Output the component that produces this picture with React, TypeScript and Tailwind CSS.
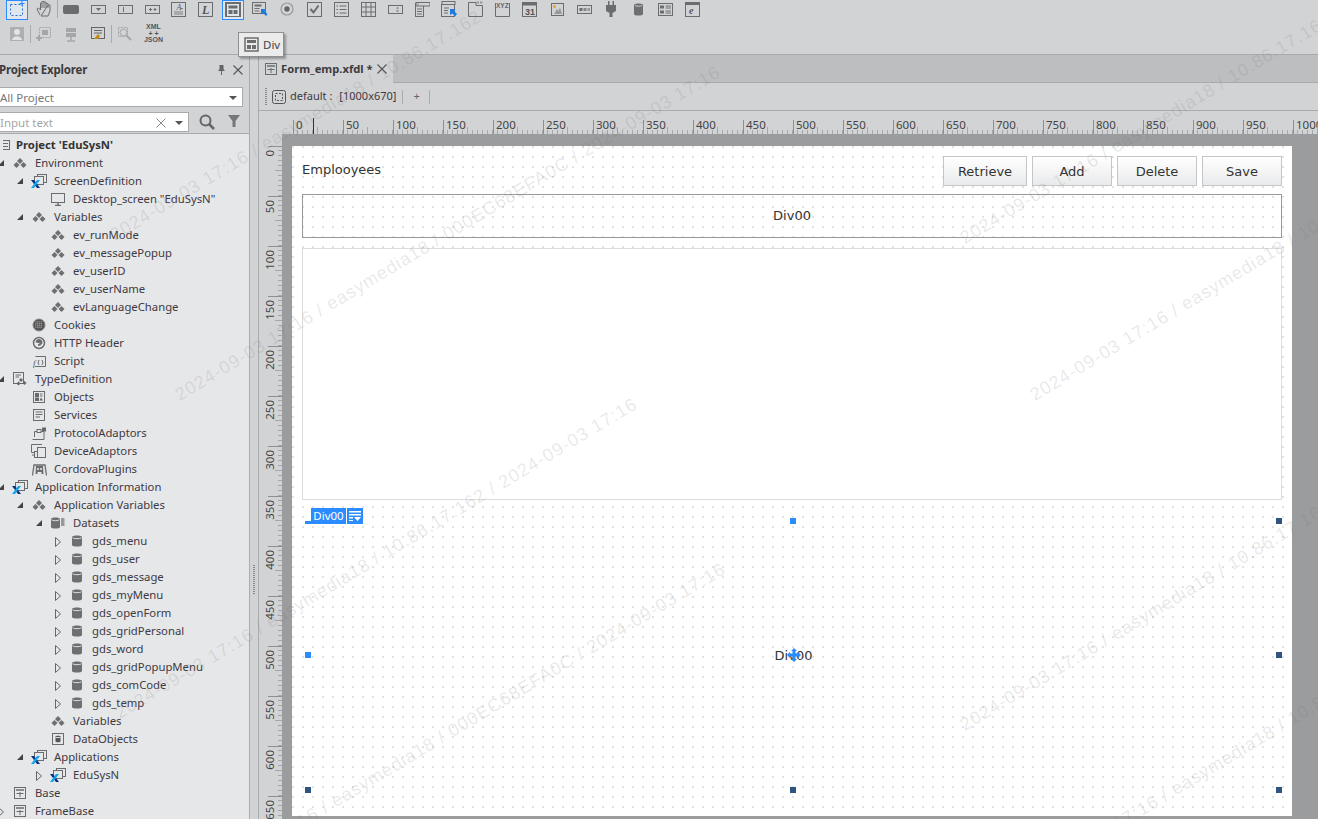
import React from "react";

const S = "#6b6c6e";
function Ico({ w = 16, h = 16, children }: { w?: number; h?: number; children: React.ReactNode }) {
  return (
    <svg width={w} height={h} viewBox={`0 0 ${w} ${h}`} fill="none" stroke={S} strokeWidth="1" className="block shrink-0">
      {children}
    </svg>
  );
}
const X = ({ x = 0, y = 8 }: { x?: number; y?: number }) => (
  <g transform={`translate(${x},${y})`}>
    <path d="M0 0 L3 0 L9 8 L6 8 Z" fill="#0c2f7a" stroke="none" />
    <path d="M6 0 L9 0 L3 8 L0 8 Z" fill="#12a5ea" stroke="none" />
  </g>
);
const Diamonds = () => (
  <Ico w={14} h={12}>
    <g fill="#6e6f71" stroke="none">
      <path d="M7 1 L10 4 L7 7 L4 4 Z" />
      <path d="M3.5 5 L6.5 8 L3.5 11 L.5 8 Z" />
      <path d="M10.5 5 L13.5 8 L10.5 11 L7.5 8 Z" />
    </g>
  </Ico>
);
const Screen = () => (
  <Ico w={16} h={16}>
    <rect x="6.5" y="1.5" width="9" height="8" />
    <rect x="3.5" y="3.5" width="9" height="8" fill="#e6e7e9" />
    <X x={0} y={7} />
  </Ico>
);
const Monitor = () => (
  <Ico w={14} h={13}>
    <rect x=".5" y=".5" width="13" height="9" />
    <path d="M4 12.5 H10 M7 10 V12" strokeWidth="1.5" />
  </Ico>
);
const Globe = () => (
  <Ico w={14} h={14}>
    <circle cx="7" cy="7" r="6" fill="#555" stroke="#888" />
    <path d="M3 5 H11 M3 7 H11 M3 9 H11 M5 3 V11 M7 3 V11 M9 3 V11" stroke="#999" strokeDasharray="1 1" />
  </Ico>
);
const Http = () => (
  <Ico w={14} h={14}>
    <circle cx="7" cy="7" r="5.5" strokeWidth="1.5" />
    <path d="M4 6 A3 3 0 0 1 10 7 A3 3 0 0 1 6 9 L9 7 Z" fill={S} />
  </Ico>
);
const Script = () => (
  <Ico w={14} h={13}>
    <path d="M3.5 1.5 H13.5 V11.5 H3" />
    <text x="1" y="11" fontSize="9" fontStyle="italic" fontFamily="Liberation Serif, serif" fill="#555" stroke="none">f</text>
    <path d="M7 5 L6 8 L7 10 M10 5 L11 8 L10 10" />
  </Ico>
);
const TypeDef = () => (
  <Ico w={14} h={14}>
    <rect x=".5" y=".5" width="10" height="11" />
    <path d="M2.5 3 H8 M2.5 5 H6" />
    <path d="M8 6 L10 8 L8 10 L6 8 Z M11.5 9 L13.5 11 L11.5 13 L9.5 11 Z M5.5 9.5 L7.5 11.5 L5.5 13.5 L3.5 11.5 Z" fill="#666" stroke="none" />
  </Ico>
);
const Objects = () => (
  <Ico w={12} h={12}>
    <rect x=".5" y=".5" width="11" height="11" />
    <rect x="2.5" y="2.5" width="3" height="3" fill="#666" />
    <path d="M7 3 H9.5 M7 5 H9.5" />
    <rect x="2.5" y="7" width="3" height="2.5" fill="#666" />
    <path d="M8 6.5 L10 9.5 H6.5 Z" fill="#666" stroke="none" />
  </Ico>
);
const Services = () => (
  <Ico w={12} h={12}>
    <rect x=".5" y=".5" width="11" height="11" />
    <path d="M2.5 3 H9.5 M2.5 5.5 H9.5 M2.5 8 H7" strokeWidth="1.2" />
  </Ico>
);
const Protocol = () => (
  <Ico w={15} h={13}>
    <path d="M.5 12.5 H12 V4.5 H2.5 V10" />
    <rect x="5" y="2.5" width="4" height="3" fill="#e6e7e9" />
    <rect x="10" y=".5" width="4" height="4" fill="#666" stroke="none" />
  </Ico>
);
const Device = () => (
  <Ico w={16} h={14}>
    <path d="M11 .5 H.5 V8.5 H3 M1 11 H6" />
    <rect x="6.5" y="3.5" width="8" height="10" fill="#e6e7e9" />
    <rect x="3.5" y="7.5" width="3" height="6" fill="#e6e7e9" />
  </Ico>
);
const Cordova = () => (
  <Ico w={15} h={14}>
    <path d="M.5 13.5 L2 3 H13 L14.5 13.5" strokeWidth="1.3" />
    <path d="M4 4 H11 L11.5 12 H9.5 V10 H5.5 V12 H3.5 Z" fill="#6b6c6e" stroke="none" />
    <circle cx="6" cy="7" r="1" fill="#eee" stroke="none" />
    <circle cx="9" cy="7" r="1" fill="#eee" stroke="none" />
  </Ico>
);
const Db = () => (
  <Ico w={10} h={12}>
    <path d="M0 2 C0 0 10 0 10 2 V10 C10 12 0 12 0 10 Z" fill="#6e6f71" stroke="none" />
    <path d="M.5 2.8 C2 4 8 4 9.5 2.8" stroke="#ddd" />
  </Ico>
);
const Datasets = () => (
  <Ico w={14} h={12}>
    <path d="M0 2 C0 0 9 0 9 2 V10 C9 12 0 12 0 10 Z" fill="#6e6f71" stroke="none" />
    <path d="M.5 2.8 C2 4 7 4 8.5 2.8" stroke="#ddd" />
    <path d="M10 1 H13.5 V9 H10 Z" fill="#999" stroke="none" />
  </Ico>
);
const DataObjects = () => (
  <Ico w={12} h={12}>
    <rect x=".5" y=".5" width="11" height="11" />
    <path d="M3.5 3.5 C3.5 2.5 8.5 2.5 8.5 3.5 V8.5 C8.5 9.5 3.5 9.5 3.5 8.5 Z" fill="#555" stroke="none" />
    <path d="M3.5 4.5 H8.5" stroke="#ddd" />
  </Ico>
);
const FormIco = () => (
  <Ico w={12} h={12}>
    <rect x=".5" y=".5" width="11" height="11" strokeWidth="1" />
    <path d="M2 3 H10" strokeWidth="1.5" />
    <path d="M6 5 V10 M2.5 6.5 H9.5" />
  </Ico>
);
const Project = () => (
  <Ico w={10} h={12}>
    <rect x="-2.5" y="1.5" width="9" height="9" />
    <path d="M-1 4.5 H5 M-1 7.5 H5" />
  </Ico>
);

type Row = { d: number; e?: "o" | "c"; i?: React.ReactNode; t: string; b?: boolean };
const dia = <Diamonds />;
const db = <Db />;
const rows: Row[] = [
  { d: 0, i: <Project />, t: "Project 'EduSysN'", b: true },
  { d: 1, e: "o", i: dia, t: "Environment" },
  { d: 2, e: "o", i: <Screen />, t: "ScreenDefinition" },
  { d: 3, i: <Monitor />, t: 'Desktop_screen "EduSysN"' },
  { d: 2, e: "o", i: dia, t: "Variables" },
  { d: 3, i: dia, t: "ev_runMode" },
  { d: 3, i: dia, t: "ev_messagePopup" },
  { d: 3, i: dia, t: "ev_userID" },
  { d: 3, i: dia, t: "ev_userName" },
  { d: 3, i: dia, t: "evLanguageChange" },
  { d: 2, i: <Globe />, t: "Cookies" },
  { d: 2, i: <Http />, t: "HTTP Header" },
  { d: 2, i: <Script />, t: "Script" },
  { d: 1, e: "o", i: <TypeDef />, t: "TypeDefinition" },
  { d: 2, i: <Objects />, t: "Objects" },
  { d: 2, i: <Services />, t: "Services" },
  { d: 2, i: <Protocol />, t: "ProtocolAdaptors" },
  { d: 2, i: <Device />, t: "DeviceAdaptors" },
  { d: 2, i: <Cordova />, t: "CordovaPlugins" },
  { d: 1, e: "o", i: <Screen />, t: "Application Information" },
  { d: 2, e: "o", i: dia, t: "Application Variables" },
  { d: 3, e: "o", i: <Datasets />, t: "Datasets" },
  ...["gds_menu", "gds_user", "gds_message", "gds_myMenu", "gds_openForm", "gds_gridPersonal", "gds_word", "gds_gridPopupMenu", "gds_comCode", "gds_temp"].map(
    (t) => ({ d: 4, e: "c" as const, i: db, t })
  ),
  { d: 3, i: dia, t: "Variables" },
  { d: 3, i: <DataObjects />, t: "DataObjects" },
  { d: 2, e: "o", i: <Screen />, t: "Applications" },
  { d: 3, e: "c", i: <Screen />, t: "EduSysN" },
  { d: 1, i: <FormIco />, t: "Base" },
  { d: 1, e: "c", i: <FormIco />, t: "FrameBase" },
];

function TreeRow({ r }: { r: Row }) {
  const textX = r.d === 0 ? 16 : 16 + r.d * 19;
  return (
    <div className="relative h-[18px] flex items-center whitespace-nowrap text-[11.3px]" style={{ paddingLeft: textX }}>
      {r.e && (
        <span className="absolute top-[5px]" style={{ left: textX - 38 }}>
          {r.e === "o" ? (
            <svg width="8" height="8" viewBox="0 0 8 8" className="block">
              <path d="M7 1 V7 H1 Z" fill="#444" />
            </svg>
          ) : (
            <svg width="8" height="10" viewBox="0 0 8 10" className="block">
              <path d="M1.5 .5 L6.5 5 L1.5 9.5 Z" fill="none" stroke="#666" />
            </svg>
          )}
        </span>
      )}
      <span className="absolute top-0 h-[18px] w-[16px] flex items-center justify-center" style={{ left: r.d === 0 ? 0 : textX - 23 }}>
        {r.i}
      </span>
      <span className={r.b ? "font-bold text-[#333]" : "text-[#3e3a42]"}>{r.t}</span>
    </div>
  );
}

const TB = ({ sel, children, sep }: { sel?: boolean; children?: React.ReactNode; sep?: boolean }) => (
  <div className="w-[27px] h-[18px] shrink-0 flex items-center justify-center relative">
    {sel && <span className="absolute left-[1px] top-0 w-[22px] h-[20px] border border-[#2a8cff] bg-[#dfe6ee]" />}
    <span className="relative -ml-[3px]">{children}</span>
    {sep && <span className="absolute right-[1px] top-0 h-[18px] w-px bg-[#a9aaac]" />}
  </div>
);

const top: React.ReactNode[] = [
  <Ico key="a"><rect x="1.5" y="3.5" width="12" height="11" stroke="#2a6fd0" strokeDasharray="2 2" /><path d="M13 0 V5 M10.5 2.5 H15.5" stroke="#2a8cff" /></Ico>,
  <Ico w={18} h={18} key="b"><path d="M5 15 L2 9 L3.5 8 L5.5 10 V3 H7 V8 M7 3 V1.5 H9 V8 M9 2 H11 V8 M11 3.5 H13 V8 M13 5 H15 V11 L13 16 H6 Z" /></Ico>,
  <svg key="c" width="16" height="9" viewBox="0 0 16 9" className="block"><rect width="16" height="9" rx="2" fill="#6b6c6e" /></svg>,
  <Ico w={15} h={9} key="d"><rect x=".5" y=".5" width="14" height="8" /><path d="M5 3 H10 L7.5 6 Z" fill={S} stroke="none" /></Ico>,
  <Ico w={15} h={9} key="e"><rect x=".5" y=".5" width="14" height="8" /><path d="M5.5 2 V7" /></Ico>,
  <Ico w={15} h={9} key="f"><rect x=".5" y=".5" width="14" height="8" /><path d="M4 4.5 H7 M5.5 3 V6 M8.5 4.5 H11.5 M10 3 V6" /></Ico>,
  <Ico key="g"><rect x=".5" y="1.5" width="14" height="14" /><text x="5.5" y="9" fontSize="8" fontStyle="italic" fontFamily="Liberation Serif, serif" fill="#555" stroke="none">A</text><path d="M3 11 H12 M9 7.5 H12 M3 13 H12" strokeWidth=".8" /></Ico>,
  <Ico key="h"><rect x=".5" y="1.5" width="14" height="14" /><text x="4" y="13" fontSize="12" fontWeight="bold" fontStyle="italic" fontFamily="Liberation Serif, serif" fill="#555" stroke="none">L</text></Ico>,
  <Ico key="i"><rect x="1" y="2" width="14" height="14" strokeWidth="2" /><rect x="3.5" y="4.5" width="9" height="3" fill={S} stroke="none" /><rect x="3.5" y="9" width="4" height="4" fill={S} stroke="none" /><rect x="8.5" y="9" width="4" height="4" fill={S} stroke="none" /></Ico>,
  <Ico w={16} h={16} key="j"><rect x=".5" y="1.5" width="13" height="11" strokeWidth="1" /><rect x="2.5" y="3.5" width="7" height="2" fill={S} stroke="none" /><rect x="2.5" y="7" width="5" height="1" fill={S} stroke="none" /><rect x="2.5" y="9.5" width="5" height="1" fill={S} stroke="none" /><path d="M9 8 H14 L12.5 10 L15.5 13 L14 15 L11 12 L9 13.5 Z" fill="#1b7be0" stroke="none" /></Ico>,
  <Ico w={14} h={14} key="k"><circle cx="7" cy="7" r="6" stroke="#999" strokeWidth="1.2" /><circle cx="7" cy="7" r="2.7" fill="#666" stroke="none" /></Ico>,
  <Ico w={15} h={15} key="l"><rect x=".5" y=".5" width="14" height="14" /><path d="M3.5 7 L6.5 10.5 L11.5 3.5" strokeWidth="2" /></Ico>,
  <Ico w={15} h={15} key="m"><rect x=".5" y=".5" width="14" height="14" /><path d="M2.5 4 H4 M5.5 4 H12.5 M2.5 7.5 H4 M5.5 7.5 H12.5 M2.5 11 H4 M5.5 11 H12.5" /></Ico>,
  <Ico w={15} h={15} key="n"><rect x=".5" y=".5" width="14" height="14" /><path d="M.5 5 H14.5 M.5 10 H14.5 M5 .5 V14.5 M10 .5 V14.5" /></Ico>,
  <Ico w={15} h={9} key="o"><rect x=".5" y=".5" width="14" height="8" /><path d="M8 3.5 L9.5 2 L11 3.5 Z M8 5.5 L9.5 7 L11 5.5 Z" fill={S} stroke="none" /></Ico>,
  <Ico w={15} h={15} key="p"><rect x=".5" y="1.5" width="8" height="13" /><rect x="1" y=".5" width="14" height="3.5" fill="#d2d3d5" /><path d="M3 1.5 V3 M2 7 H7 M2 9.5 H7 M2 12 H7" /></Ico>,
  <Ico key="q"><rect x=".5" y="3.5" width="13" height="12" strokeWidth="1" /><rect x="1" y=".5" width="13" height="3" fill="#d2d3d5" /><path d="M3 7 H8 M3 9.5 H7 M3 12 H7" /><path d="M9 8 H14.5 L13 10 L16 13 L14 15.5 L11.5 12.5 L9 14 Z" fill="#1b7be0" stroke="none" /></Ico>,
  <Ico key="r"><path d="M.5 15.5 V1.5 H8 V4.5 H14.5 V15.5 Z" /><rect x="8.5" y=".5" width="2.5" height="2" fill="#999" stroke="none" /><rect x="12" y=".5" width="2.5" height="2" fill="#999" stroke="none" /></Ico>,
  <Ico key="s"><path d="M.5 2 V15.5 H14.5 V2" /><text x="1" y="7" fontSize="6.5" fontWeight="bold" fontFamily="Liberation Sans, sans-serif" fill="#666" stroke="none">XYZ</text></Ico>,
  <Ico key="t"><rect x=".5" y="1.5" width="14" height="14" /><rect x=".5" y="1.5" width="14" height="3" fill={S} stroke="none" /><text x="3" y="13.5" fontSize="9" fontWeight="bold" fontFamily="Liberation Sans, sans-serif" fill="#555" stroke="none">31</text></Ico>,
  <Ico w={13} h={13} key="u"><rect x=".5" y=".5" width="12" height="12" /><circle cx="3.5" cy="3.5" r="1.3" fill="#d79a1c" stroke="none" /><path d="M3 11 L6 6 L7.5 8 L9 4.5 L11 11 Z" fill="#999" stroke="none" /></Ico>,
  <Ico w={15} h={9} key="v"><rect x=".5" y=".5" width="14" height="8" /><rect x="2.5" y="3" width="3" height="3" fill={S} stroke="none" /><rect x="6.5" y="3" width="3" height="3" fill="#888" stroke="none" /><rect x="10.5" y="3" width="2.5" height="3" fill="#999" stroke="none" /></Ico>,
  <svg key="w" width="10" height="16" viewBox="0 0 10 16" className="block"><path d="M2 0 H3.5 V4 H6.5 V0 H8 V4 H10 V10 L6.5 12 V16 H3.5 V12 L0 10 V4 H2 Z" fill="#6b6c6e" /></svg>,
  <svg key="x" width="9" height="13" viewBox="0 0 9 13" className="block"><path d="M0 2 C0 0 9 0 9 2 V11 C9 13 0 13 0 11 Z" fill="#6e6f71" /><path d="M1 2.5 C3 3.5 6 3.5 8 2.5" stroke="#ccc" fill="none" /></svg>,
  <Ico w={15} h={13} key="y"><rect x=".5" y=".5" width="14" height="12" /><rect x="2" y="2.5" width="4" height="3" fill={S} stroke="none" /><rect x="2" y="7.5" width="4" height="3" fill={S} stroke="none" /><path d="M7.5 3 H13 M7.5 5 H13 M7.5 8 H13 M7.5 10 H13" /></Ico>,
  <Ico w={15} h={15} key="z"><rect x=".5" y=".5" width="14" height="14" /><rect x=".5" y=".5" width="14" height="2.5" fill={S} stroke="none" /><text x="4" y="12" fontSize="10" fontWeight="bold" fontStyle="italic" fontFamily="Liberation Serif, serif" fill="#555" stroke="none">e</text></Ico>,
];

const D = "2024-09-03 17:16";
const marks: { x: number; y: number; t: string }[] = [
  { x: 105, y: 225, t: `${D} / easymedia18 / 10.86.17.162` },
  { x: 170, y: 385, t: `${D} / easymedia18 / 000EC68EFA0C / ${D}` },
  { x: 110, y: 703, t: `${D} / easymedia18 / 10.86.17.162 / ${D}` },
  { x: 175, y: 882, t: `${D} / easymedia18 / 000EC68EFA0C / ${D}` },
  { x: 955, y: 228, t: `${D} / easymedia18 / 10.86.17.162` },
  { x: 1025, y: 385, t: `${D} / easymedia18 / 10.86.17.162` },
  { x: 955, y: 715, t: `${D} / easymedia18 / 10.86.17.162` },
  { x: 1015, y: 870, t: `${D} / easymedia18 / 10.86.17.162` },
];

const five = Array.from({ length: 10 }, (_, k) => k);

function TopRuler() {
  const items = Array.from({ length: 21 }, (_, i) => i * 50);
  return (
    <div className="relative h-[23px] shrink-0 overflow-hidden bg-[#d2d3d5]">
      <div className="flex ml-[34px] h-full">
        {items.map((n) => (
          <div key={n} className="relative w-[50px] h-full shrink-0">
            <span className="absolute left-0 top-[9px] bottom-0 w-px bg-[#8e8f91]" />
            <span className="absolute left-[3px] top-[6px] text-[#444] leading-[16px]">{n}</span>
            <div className="absolute left-0 right-0 bottom-0 h-[4px] flex items-end">
              {five.map((k) => (
                <span key={k} className={`w-[5px] border-r border-[#a5a6a8] ${k === 4 ? "h-[7px]" : "h-[4px]"}`} />
              ))}
            </div>
          </div>
        ))}
      </div>
      <span className="absolute left-[54px] top-[7px] h-[16px] w-px bg-[#333]" />
    </div>
  );
}

function LeftRuler() {
  const items = Array.from({ length: 14 }, (_, i) => i * 50);
  return (
    <div className="w-[23px] shrink-0 bg-[#d2d3d5] overflow-hidden pt-[12px]">
      {items.map((n) => (
        <div key={n} className="relative h-[50px] w-full">
          <span className="absolute right-0 top-0 w-[14px] h-px bg-[#8e8f91]" />
          <span className="absolute left-[4px] top-[4px] leading-[14px] [writing-mode:vertical-rl] rotate-180 text-[#444]">{n}</span>
          <div className="absolute right-0 top-0 bottom-0 w-[4px] flex flex-col items-end">
            {five.map((k) => (
              <span key={k} className={`h-[5px] shrink-0 border-b border-[#a5a6a8] ${k === 4 ? "w-[7px]" : "w-[4px]"}`} />
            ))}
          </div>
        </div>
      ))}
    </div>
  );
}

const Handle = ({ cls }: { cls: string }) => <span className={`absolute w-[6px] h-[6px] ${cls}`} />;

const Btn = ({ t, w }: { t: string; w: string }) => (
  <div className={`${w} h-[30px] pt-px flex items-center justify-center border border-[#c4c5c6] bg-gradient-to-b from-white to-[#e9eaeb] text-[#333]`}>{t}</div>
);

export default function App() {
  return (
    <div className="relative w-[1318px] h-[819px] overflow-hidden bg-[#d2d3d5] text-[11.5px] font-['Noto_Sans',sans-serif]">
      {/* Toolbars */}
      <div className="h-[55px] border-b border-[#a9aaac] bg-[#d2d3d5]">
        <div className="flex items-center h-[18px] pl-[5px]">
          {top.map((ic, i) => (
            <TB key={i} sel={i === 0 || i === 8} sep={i === 1}>
              {ic}
            </TB>
          ))}
        </div>
        <div className="flex items-center h-[24px] pl-[5px] mt-[4px]">
          <TB sep>
            <svg width="15" height="15" viewBox="0 0 15 15" className="block"><rect width="14" height="14" fill="#aeafb1" /><circle cx="7" cy="5" r="3" fill="#e3e3e4" /><path d="M2 13 C3 8 11 8 12 13 Z" fill="#e3e3e4" /></svg>
          </TB>
          <TB>
            <svg width="16" height="16" viewBox="0 0 16 16" fill="none" stroke="#a5a6a8" className="block"><rect x="3.5" y="1.5" width="11" height="10" strokeDasharray="2 1" /><path d="M3 9 V15 M0 12 H6" strokeWidth="2" /><rect x="6" y="4" width="6" height="5" fill="#a5a6a8" stroke="none" /></svg>
          </TB>
          <TB>
            <svg width="12" height="15" viewBox="0 0 12 15" className="block"><path d="M1 1 H11 V5 H1 Z M1 6 H11 V10 H1 Z" fill="#a5a6a8" /><path d="M6 10 V13 M2 14 H10" stroke="#a5a6a8" strokeWidth="1.5" /></svg>
          </TB>
          <TB sep>
            <svg width="14" height="14" viewBox="0 0 14 14" fill="none" stroke="#666" className="block"><rect x=".5" y=".5" width="13" height="11" /><path d="M3 3.5 H11 M3 6 H11" /><path d="M3 12 L7 7 L9 9 L7 12 Z" fill="#c18a12" stroke="none" /></svg>
          </TB>
          <TB>
            <svg width="14" height="14" viewBox="0 0 14 14" fill="none" stroke="#a5a6a8" className="block"><rect x=".5" y=".5" width="9" height="9" strokeDasharray="2 1" /><circle cx="5.5" cy="5.5" r="3.5" /><path d="M8.5 8.5 L13 13" strokeWidth="2" /></svg>
          </TB>
          <div className="w-[27px] flex flex-col items-center text-[7px] leading-[6.5px] font-bold text-[#555] font-['Liberation_Sans',sans-serif]">
            <span>XML</span>
            <span>+ +</span>
            <span>JSON</span>
          </div>
        </div>
      </div>

      <div className="flex h-[764px]">
        {/* Left panel */}
        <div className="w-[250px] shrink-0 border-r border-[#a9aaac] flex flex-col overflow-hidden">
          <div className="h-[30px] flex items-center justify-between shrink-0 pr-[6px]">
            <span className="font-bold text-[#3c3c3e] whitespace-nowrap -ml-[1px] tracking-[-0.2px]">Project Explorer</span>
            <div className="flex items-center gap-[7px]">
              <svg width="9" height="10" viewBox="0 0 9 10" className="block"><path d="M2.5 0 H6.5 V4 L8 6 H1 L2.5 4 Z M4 6 H5 V10 H4 Z" fill="#666" /></svg>
              <svg width="10" height="10" viewBox="0 0 10 10" className="block"><path d="M.5 .5 L9.5 9.5 M9.5 .5 L.5 9.5" stroke="#555" strokeWidth="1.1" /></svg>
            </div>
          </div>
          <div className="h-[20px] w-[243px] mt-[2px] shrink-0 bg-white border border-[#a9aaac] border-l-0 flex items-center justify-between pr-[5px] pt-px text-[#777]">
            <span>All Project</span>
            <svg width="8" height="4" viewBox="0 0 8 4" className="block"><path d="M0 0 H8 L4 4 Z" fill="#555" /></svg>
          </div>
          <div className="h-[22px] flex items-center mt-[4px] shrink-0 relative">
            <div className="w-[189px] h-[20px] bg-white border border-[#a9aaac] border-l-0 flex items-center text-[#a5a5a5] relative pr-[5px] pt-px">
              <span className="flex-1">Input text</span>
              <svg width="10" height="10" viewBox="0 0 10 10" className="block mr-[9px]"><path d="M.5 .5 L9.5 9.5 M9.5 .5 L.5 9.5" stroke="#888" /></svg>
              <svg width="8" height="4" viewBox="0 0 8 4" className="block"><path d="M0 0 H8 L4 4 Z" fill="#555" /></svg>
            </div>
            <svg width="16" height="16" viewBox="0 0 16 16" fill="none" stroke="#666" className="block ml-[10px]"><circle cx="6.5" cy="6.5" r="5" strokeWidth="2" /><path d="M10 10 L15 15" strokeWidth="2.5" /></svg>
            <svg width="12" height="12" viewBox="0 0 12 12" className="block ml-[13px] -mt-[3px]"><path d="M0 0 H12 L7.5 6 V12 H4.5 V6 Z" fill="#777" /></svg>
          </div>
          <div className="flex-1 bg-[#e6e7e9] border-t border-[#a9aaac] pt-[2px] overflow-hidden">
            {rows.map((r, i) => (
              <TreeRow key={i} r={r} />
            ))}
          </div>
        </div>

        {/* Splitter */}
        <div className="w-[8px] shrink-0 relative">
          <span className="absolute left-[3px] top-[510px] h-[30px] w-[2px] bg-[repeating-linear-gradient(#888_0,#888_1px,transparent_1px,transparent_2px)]" />
        </div>

        {/* Right side */}
        <div className="flex-1 flex flex-col min-w-0 border-l border-[#a9aaac]">
          <div className="h-[28px] flex shrink-0">
            <div className="w-[134px] flex items-center pl-[6px] gap-[4px] shrink-0">
              <FormIco />
              <span className="font-bold text-[11.2px] text-[#3c3c3e] whitespace-nowrap">Form_emp.xfdl *</span>
              <svg width="10" height="10" viewBox="0 0 10 10" className="block"><path d="M.5 .5 L9.5 9.5 M9.5 .5 L.5 9.5" stroke="#555" strokeWidth="1.1" /></svg>
            </div>
            <div className="flex-1 bg-[#bdbec0] border-b border-[#a9aaac]" />
          </div>
          <div className="h-[28px] flex items-center shrink-0 border-b border-[#a9aaac] text-[#3e3a42] text-[11px]">
            <span className="ml-[6px] w-[2px] h-[18px] bg-[repeating-linear-gradient(#888_0,#888_1px,transparent_1px,transparent_2px)]" />
            <svg width="14" height="14" viewBox="0 0 14 14" fill="none" stroke="#555" className="block ml-[5px]"><rect x=".5" y=".5" width="13" height="13" rx="2" /><rect x="3.5" y="3.5" width="7" height="7" strokeDasharray="2 1.5" /></svg>
            <span className="ml-[4px] whitespace-nowrap">default :</span>
            <span className="ml-[7px] whitespace-nowrap">[1000x670]</span>
            <span className="ml-[6px] h-[14px] w-px bg-[#a9aaac]" />
            <span className="ml-[10px] text-[#666]">+</span>
            <span className="ml-[9px] h-[14px] w-px bg-[#a9aaac]" />
          </div>
          <TopRuler />
          <div className="flex flex-1 min-h-0 overflow-hidden">
            <LeftRuler />
            <div className="flex-1 bg-[#9b9c9e] pt-[12px] pl-[10px] overflow-hidden">
              {/* Form */}
              <div className="relative w-[1000px] h-[670px] bg-white bg-[radial-gradient(#e2e2e2_1px,transparent_1.2px)] bg-[size:10px_10px] bg-[position:-4px_-4px] px-[10px] pt-[10px] text-[13px] font-['DejaVu_Sans',sans-serif] text-[#333]">
                <div className="flex items-start h-[38px]">
                  <span className="flex-1 mt-[4px]">Emplooyees</span>
                  <div className="flex gap-[5px]">
                    <Btn t="Retrieve" w="w-[84px]" />
                    <Btn t="Add" w="w-[80px]" />
                    <Btn t="Delete" w="w-[80px]" />
                    <Btn t="Save" w="w-[80px]" />
                  </div>
                </div>
                <div className="h-[44px] border border-[#999] flex items-center justify-center">Div00</div>
                <div className="h-[252px] mt-[10px] border border-[#dcdcdc] bg-white" />
                {/* Selected Div */}
                <div className="relative mt-[21px] ml-[6px] w-[971px] h-[269px] flex items-center justify-center">
                  Div00
                  <div className="absolute -left-[3px] -top-[13px] flex items-stretch h-[16px] font-['Noto_Sans',sans-serif] text-[11.5px] text-white">
                    <span className="w-[6px] h-[16px] relative"><span className="absolute bottom-0 left-0 w-[6px] h-[3px] bg-[#2a8cff]" /></span>
                    <span className="bg-[#2a8cff] w-[35px] text-center leading-[15px]">Div00</span>
                    <span className="ml-px w-[16px] bg-[#2a8cff] flex items-center justify-center">
                      <svg width="12" height="10" viewBox="0 0 12 10" className="block"><path d="M0 0 H12 V1.5 H0 Z M0 3 H12 V4.5 H0 Z M0 6 H4 V7.5 H0 Z M0 9 H4 V10 H0 Z M5 6 H12 L8.5 10 Z" fill="#fff" /></svg>
                    </span>
                  </div>
                  <Handle cls="left-1/2 -top-[3px] -ml-[4px] bg-[#2a8cff]" />
                  <Handle cls="-left-[3px] top-1/2 -mt-[4px] bg-[#2a8cff]" />
                  <Handle cls="-right-[3px] -top-[3px] bg-[#2f5480]" />
                  <Handle cls="-right-[3px] top-1/2 -mt-[4px] bg-[#2f5480]" />
                  <Handle cls="-left-[3px] -bottom-[3px] bg-[#2f5480]" />
                  <Handle cls="left-1/2 -bottom-[3px] -ml-[4px] bg-[#2f5480]" />
                  <Handle cls="-right-[3px] -bottom-[3px] bg-[#2f5480]" />
                  <svg width="14" height="14" viewBox="0 0 14 14" className="absolute left-1/2 top-1/2 -ml-[7px] -mt-[8px]">
                    <path d="M7 0 L10 3 H8.5 V5.5 H11 V4 L14 7 L11 10 V8.5 H8.5 V11 H10 L7 14 L4 11 H5.5 V8.5 H3 V10 L0 7 L3 4 V5.5 H5.5 V3 H4 Z" fill="#2a8cff" />
                  </svg>
                </div>
              </div>
            </div>
          </div>
        </div>
      </div>

      {/* Tooltip */}
      <div className="absolute left-[238px] top-[32px] w-[46px] h-[25px] bg-[#ebebeb] border border-[#8f9092] shadow-[2px_2px_2px_rgba(0,0,0,0.3)] flex items-center pl-[5px] gap-[4px] text-[#444]">
        <Ico w={15} h={15}>
          <rect x="1" y="1" width="13" height="13" strokeWidth="1.5" />
          <rect x="3" y="3" width="9" height="3" fill={S} stroke="none" />
          <rect x="3" y="8" width="4" height="4" fill={S} stroke="none" />
          <rect x="8" y="8" width="4" height="4" fill={S} stroke="none" />
        </Ico>
        <span>Div</span>
      </div>

      {/* Watermark */}
      <div className="absolute inset-0 pointer-events-none overflow-hidden font-['Liberation_Sans',sans-serif] text-[18px] tracking-[1px] text-[rgba(110,110,110,0.16)]">
        {marks.map((m, i) => (
          <span
            key={i}
            className="absolute whitespace-nowrap origin-top-left -rotate-[31deg]"
            style={{ left: m.x, top: m.y }}
          >
            {m.t}
          </span>
        ))}
      </div>
    </div>
  );
}
